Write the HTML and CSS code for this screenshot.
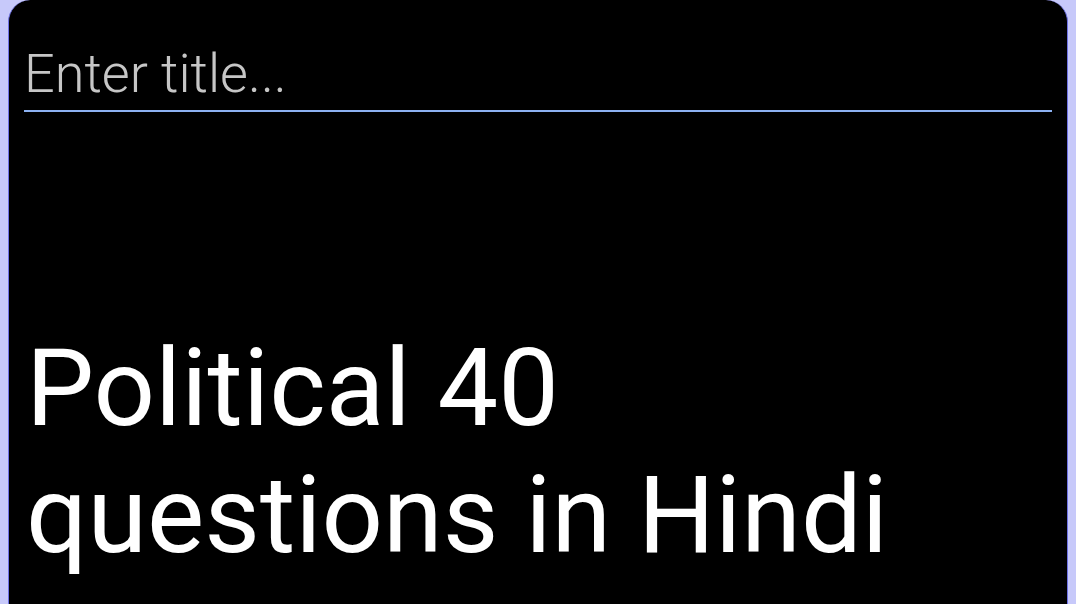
FILE: index.html
```html
<!DOCTYPE html>
<html lang="en">
<head>
<meta charset="UTF-8">
<meta name="viewport" content="width=device-width, initial-scale=1.0">
<title>Note</title>
<link rel="stylesheet" href="styles.css">
</head>
<body>

<div class="note">
    <input type="text" class="note-title" placeholder="Enter title...">
    <div class="note-body">Political 40 questions in Hindi</div>
</div>

</body>
</html>
```

FILE: styles.css
```css
html, body {
    height: 100%;
}

body {
    margin: 0;
    padding: 0 8px;
    background-color: #c7c9fa;
    font-family: Roboto, "Noto Sans", sans-serif;
    overflow: hidden;
}

.note {
    box-sizing: border-box;
    height: 100%;
    background-color: #000;
    border-left: 1px solid #6f72e6;
    border-right: 1px solid #6f72e6;
    border-radius: 22px 22px 0 0;
    padding: 43px 15px 0 15px;
}

.note-title {
    display: block;
    box-sizing: border-box;
    width: 100%;
    margin: 0;
    padding: 0 0 7px 0;
    background: transparent;
    border: none;
    border-bottom: 2px solid #8db2f2;
    outline: none;
    font-family: Roboto, sans-serif;
    font-weight: 300;
    font-size: 54px;
    line-height: 60px;
    height: 69px;
    color: #fff;
}

.note-title::placeholder {
    color: #c6c6c6;
}

.note-body {
    margin-top: 213px;
    padding-left: 2px;
    color: #fff;
    font-size: 108px;
    line-height: 127px;
    width: 920px;
}
```
